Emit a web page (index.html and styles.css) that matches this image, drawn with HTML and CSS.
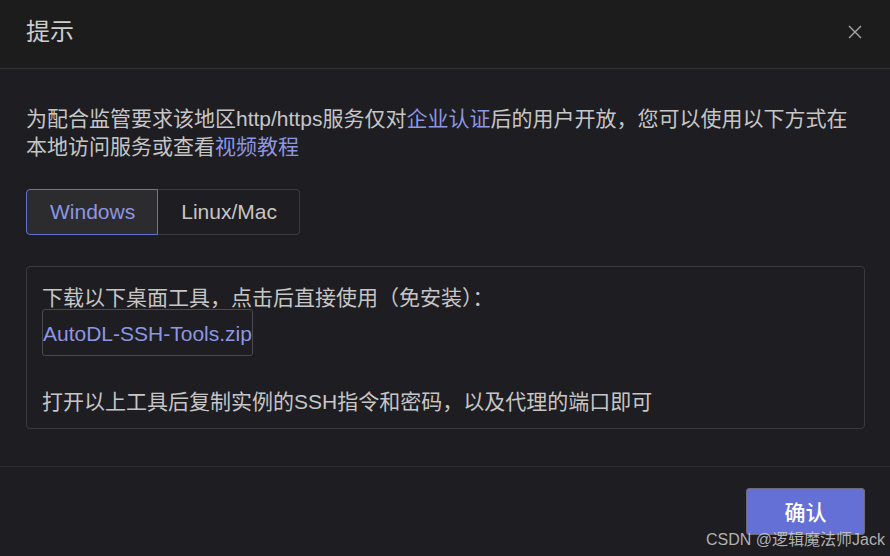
FILE: index.html
```html
<!DOCTYPE html>
<html lang="zh-CN">
<head>
<meta charset="utf-8">
<title>提示</title>
<link rel="stylesheet" href="styles.css">
</head>
<body>
<div class="dialog">
  <div class="header">
    <span class="title">提示</span>
    <svg class="close" width="14" height="14" viewBox="0 0 14 14"><path d="M1 1L13 13M13 1L1 13" stroke="#a8a8a8" stroke-width="1.4" fill="none"/></svg>
  </div>
  <div class="content">
    <p class="intro">为配合监管要求该地区http/https服务仅对<span class="link">企业认证</span>后的用户开放，您可以使用以下方式在本地访问服务或查看<span class="link">视频教程</span></p>
    <div class="tabs">
      <div class="tab active">Windows</div>
      <div class="tab">Linux/Mac</div>
    </div>
    <div class="panel">
      <div class="line">下载以下桌面工具，点击后直接使用（免安装）：</div>
      <div class="file">AutoDL-SSH-Tools.zip</div>
      <div class="line last">打开以上工具后复制实例的SSH指令和密码，以及代理的端口即可</div>
    </div>
  </div>
  <div class="footer">
    <button class="confirm">确认</button>
  </div>
  <div class="watermark">CSDN @逻辑魔法师Jack</div>
</div>
</body>
</html>
```

FILE: styles.css
```css
html, body {
  margin: 0;
  padding: 0;
  background: #1e1d22;
}
body {
  font-family: "Liberation Sans", "Noto Sans CJK SC", sans-serif;
  color: #c6c6c6;
}
.dialog {
  position: relative;
  width: 890px;
  height: 556px;
  overflow: hidden;
}
.header {
  height: 68px;
  background: #1c1c1c;
  border-bottom: 1px solid #343436;
  display: flex;
  align-items: center;
  justify-content: space-between;
  padding: 0 28px 0 26px;
}
.title {
  font-size: 24px;
  color: #cdcdcd;
  line-height: 1;
  margin-top: -4px;
}
.close {
  display: block;
  margin-top: -4px;
}
.content {
  padding: 36px 25px 37px 26px;
}
.intro {
  margin: 0;
  font-size: 21px;
  line-height: 28px;
  color: #c6c6c6;
}
.link {
  color: #8d96e0;
}
.tabs {
  display: flex;
  margin-top: 28px;
}
.tab {
  height: 44px;
  line-height: 44px;
  font-size: 21px;
  padding: 0 22px 0 23px;
  border: 1px solid #3a3a3e;
  border-left: none;
  border-radius: 0 4px 4px 0;
  color: #c6c6c6;
}
.tab.active {
  border: 1px solid #6570cf;
  border-radius: 4px 0 0 4px;
  background: #2c2c2e;
  color: #8d96e0;
}
.panel {
  margin-top: 31px;
  border: 1px solid #3a3a3e;
  border-radius: 4px;
  padding: 20px 15px 15px 15px;
  font-size: 21px;
}
.line {
  line-height: 22px;
}
.line.last {
  margin-top: 35px;
}
.file {
  width: 209px;
  height: 45px;
  line-height: 47px;
  border: 1px solid #4a4a4e;
  border-radius: 3px;
  color: #8d96e0;
  white-space: nowrap;
  padding-left: 0;
}
.footer {
  border-top: 1px solid #2e2e32;
  padding: 21px 25px 21px 26px;
  display: flex;
  justify-content: flex-end;
}
.confirm {
  width: 119px;
  height: 47px;
  background: #6470d6;
  border: 1px solid #6a6a78;
  border-radius: 3px;
  color: #ffffff;
  font-family: "Liberation Sans", "Noto Sans CJK SC", sans-serif;
  font-size: 21px;
  font-weight: 500;
  padding: 0 0 2px 0;
}
.watermark {
  position: absolute;
  right: 5px;
  bottom: 7px;
  font-size: 16px;
  line-height: 18px;
  color: rgba(205, 205, 205, 0.85);
  white-space: nowrap;
}
```
